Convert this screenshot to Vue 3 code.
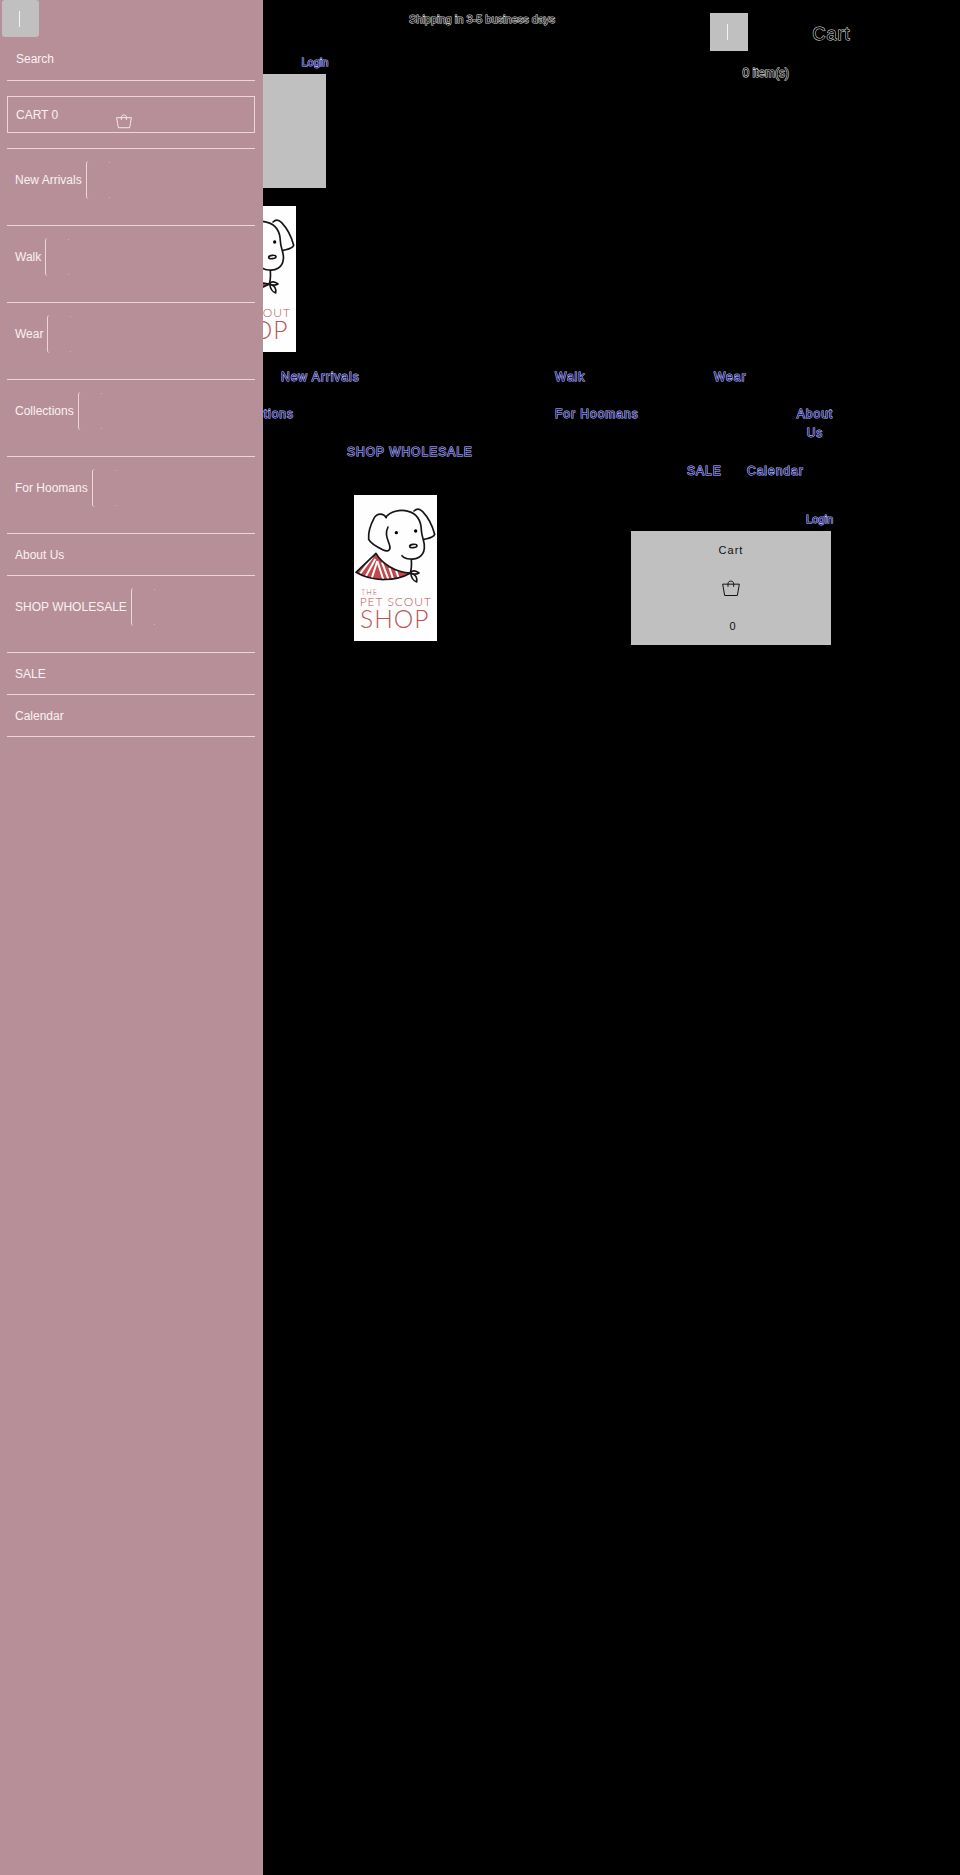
<template>
  <div class="page">
    <!-- shared drawings -->
    <svg class="sprite" aria-hidden="true">
      <symbol id="bag" viewBox="0 0 54 50">
        <path d="M2 12H52L46 46H8Z M18 20V11C18 0 35 0 35 11V20" fill="none" stroke="currentColor" stroke-width="3" />
      </symbol>
      <symbol id="logo" viewBox="42 30 249 438">
        <clipPath id="scarf">
          <path d="M108 205C125 235 165 262 212 264C170 288 100 293 48 262Z" />
        </clipPath>
        <rect x="42" y="30" width="249" height="438" fill="#fefefe" />
        <g clip-path="url(#scarf)">
          <rect x="42" y="200" width="175" height="95" fill="#c4474b" />
          <path
            d="M98 216L56 272M106 222L72 284M112 228L92 290M112 228L132 290M126 232L148 290M148 248L162 290M168 256L180 290"
            fill="none"
            stroke="#fff"
            stroke-width="6"
          />
        </g>
        <g fill="none" stroke="#151515" stroke-width="5" stroke-linecap="round" stroke-linejoin="round">
          <path d="M108 205L48 262C100 293 170 288 212 264C165 262 125 235 108 205Z" />
          <path d="M139 98C130 84 112 84 103 98C90 122 84 142 86 163C92 176 112 186 128 194C142 201 150 198 150 186C146 166 132 150 144 126" />
          <path d="M137 97C150 80 180 71 205 79C230 86 243 105 244 135C245 160 256 170 253 190C250 216 228 225 210 222C198 221 190 217 186 212" />
          <path d="M222 78C230 70 240 72 248 80C265 98 278 125 284 148C280 158 268 159 253 163" />
          <path d="M214 224C215 240 215 252 211 263" />
          <path d="M212 263C217 254 228 257 237 264C228 269 219 268 212 264C214 278 221 288 230 291C233 280 227 268 214 265" />
          <ellipse cx="220" cy="183" rx="11" ry="5" transform="rotate(-6 220 183)" />
        </g>
        <circle cx="169" cy="143" r="5" />
        <circle cx="227" cy="138" r="5" />
        <g class="logo-text" fill="#b95558">
          <text x="63" y="329" font-size="22">THE</text>
          <text x="59" y="364" font-size="36">PET SCOUT</text>
          <text x="60" y="428" font-size="74">SHOP</text>
        </g>
      </symbol>
    </svg>

    <main class="content">
      <p class="announcement outlined">Shipping in 3-5 business days</p>

      <section class="bar-top">
        <a href="#" class="login link">Login</a>
        <button class="cart-block" type="button" aria-label="Cart"></button>
        <svg class="logo" role="img" aria-label="The Pet Scout Shop"><use href="#logo" /></svg>
      </section>

      <nav class="nav">
        <div v-for="(row, i) in navRows" :key="i" class="nav-row" :class="'row-' + (i + 1)">
          <a v-for="item in row" :key="item" href="#" class="link">{{ item }}</a>
        </div>
      </nav>

      <section class="bar-bottom">
        <svg class="logo" role="img" aria-label="The Pet Scout Shop"><use href="#logo" /></svg>
        <div class="account">
          <a href="#" class="login link">Login</a>
          <button class="cart-block" type="button">
            <span>Cart</span>
            <svg class="bag"><use href="#bag" /></svg>
            <span class="qty">0</span>
          </button>
        </div>
      </section>
    </main>

    <aside class="cart-panel">
      <div class="cart-head">
        <button class="close square" type="button" aria-label="Close cart"></button>
        <h2 class="outlined">Cart</h2>
      </div>
      <p class="outlined">0 item(s)</p>
    </aside>

    <aside class="drawer">
      <button class="close" type="button" aria-label="Close menu"></button>
      <input class="search" type="text" placeholder="Search" aria-label="Search" />
      <a href="#" class="drawer-cart">
        CART 0
        <svg class="bag-small"><use href="#bag" /></svg>
      </a>
      <ul class="menu">
        <li v-for="item in menu" :key="item.label" :class="{ parent: item.children }">
          <a href="#">{{ item.label }}</a>
          <button v-if="item.children" class="toggle" type="button" :aria-label="'Expand ' + item.label"></button>
        </li>
      </ul>
    </aside>
  </div>
</template>

<script setup>
const navRows = [
  ['New Arrivals', 'Walk', 'Wear'],
  ['Collections', 'For Hoomans', 'About Us'],
  ['SHOP WHOLESALE'],
  ['SALE', 'Calendar']
]

const menu = [
  { label: 'New Arrivals', children: true },
  { label: 'Walk', children: true },
  { label: 'Wear', children: true },
  { label: 'Collections', children: true },
  { label: 'For Hoomans', children: true },
  { label: 'About Us' },
  { label: 'SHOP WHOLESALE', children: true },
  { label: 'SALE' },
  { label: 'Calendar' }
]
</script>

<style>
body {
  background: #000;
}
</style>

<style scoped>
.page {
  position: relative;
  min-height: 100vh;
  overflow: hidden;
  background: #000;
  font-family: 'Liberation Sans', Arial, sans-serif;
  font-size: 12px;
  line-height: 19px;
}

p,
h2,
ul {
  margin: 0;
  padding: 0;
}

a {
  text-decoration: none;
}

button {
  border: 0;
  padding: 0;
  background: #c0c0c0;
  font-family: inherit;
}

.sprite {
  position: absolute;
  width: 0;
  height: 0;
}

.outlined {
  color: #000;
  -webkit-text-stroke: 1px #e4e4e4;
  paint-order: stroke fill;
}

.link {
  color: #141478;
  -webkit-text-stroke: 1px #c8c8ff;
  paint-order: stroke fill;
}

.announcement {
  padding: 10px 0 24px 4px;
  text-align: center;
  font-size: 11px;
}

.login {
  margin-bottom: 2px;
  font-size: 11px;
}

.logo {
  display: block;
  width: 83px;
  height: 146px;
}

.logo-text {
  font-family: Lato, sans-serif;
  font-weight: 300;
  letter-spacing: 3px;
}

.bar-top {
  display: flex;
  flex-direction: column;
  align-items: flex-end;
  width: calc(34% + 2px);
}

.bar-top .logo {
  margin: 18px 32px 16px 0;
}

.cart-block {
  display: flex;
  flex-direction: column;
  align-items: center;
  justify-content: space-between;
  width: 200px;
  height: 114px;
  margin-right: 2px;
  padding: 10px 0 9px;
  color: #111;
  font-size: 11px;
  line-height: 19px;
  letter-spacing: 1px;
}

.bag {
  width: 18px;
  height: 17px;
}

.qty {
  padding-left: 4px;
}

.nav {
  letter-spacing: 1px;
}

.nav-row {
  display: grid;
}

.row-1 {
  grid-template-columns: 281fr 274fr 159fr 246fr;
  margin-bottom: 18px;
}

.row-1 .link:first-child {
  grid-column: 2;
}

.row-2 {
  grid-template-columns: 294fr 261fr 241fr 38fr 126fr;
}

.row-2 .link:first-child {
  text-align: right;
}

.row-2 .link:nth-child(2) {
  grid-column: 3;
}

.row-2 .link:nth-child(3) {
  grid-column: 4;
  text-align: center;
}

.row-3 {
  grid-template-columns: 347fr 613fr;
}

.row-4 {
  grid-template-columns: 687fr 60fr 213fr;
}

.row-3 .link:first-child,
.row-4 .link:first-child {
  grid-column: 2;
}

.bar-bottom {
  display: grid;
  grid-template-columns: 354fr 277fr 329fr;
  padding-top: 14px;
}

.bar-bottom .logo {
  grid-column: 2;
}

.account {
  display: flex;
  flex-direction: column;
  align-items: flex-end;
  width: 202px;
  padding-top: 15px;
}

.cart-panel {
  position: absolute;
  top: 13px;
  right: 0;
  width: 26%;
}

.cart-head {
  display: flex;
  align-items: center;
  gap: 64px;
  margin-bottom: 13px;
}

.cart-head h2 {
  padding-top: 4px;
  font-size: 18px;
  font-weight: 400;
  letter-spacing: 1px;
}

.cart-panel p {
  padding-left: 32px;
}

.close {
  display: flex;
  align-items: center;
  justify-content: center;
  width: 38px;
  height: 38px;
  padding-right: 3px;
  border-radius: 3px;
}

.close::before {
  content: '';
  width: 1px;
  height: 16px;
  background: #f4f4f4;
}

.square {
  border-radius: 0;
}

.drawer {
  position: absolute;
  top: 0;
  bottom: 0;
  left: 0;
  box-sizing: border-box;
  width: 263px;
  padding: 0 7px;
  border-right: 1px solid #a8979b;
  background: #b68f99;
  color: #fbf1f3;
}

.drawer .close {
  width: 37px;
  height: 37px;
  margin-left: -5px;
}

.search {
  display: block;
  box-sizing: border-box;
  width: 100%;
  height: 32px;
  margin-top: 12px;
  padding: 0 9px 11px;
  border: 0;
  border-bottom: 1px solid #edd5da;
  background: none;
  color: inherit;
  font: inherit;
}

.search::placeholder {
  color: inherit;
  opacity: 1;
}

.drawer-cart {
  display: flex;
  align-items: center;
  box-sizing: border-box;
  height: 37px;
  margin: 15px 0;
  padding: 1px 8px 0;
  border: 1px solid #edd5da;
  color: inherit;
}

.bag-small {
  width: 16px;
  height: 15px;
  margin: 12px 0 0 58px;
}

.menu {
  list-style: none;
  border-top: 1px solid #edd5da;
}

.menu li {
  display: flex;
  align-items: center;
  box-sizing: border-box;
  height: 42px;
  padding: 1px 8px 0;
  border-bottom: 1px solid #edd5da;
}

.menu .parent {
  height: 77px;
  padding: 0 8px 14px;
}

.menu a {
  color: inherit;
}

.toggle {
  width: 24px;
  height: 38px;
  margin-left: 4px;
  border-left: 1px solid #edd5da;
  border-radius: 3px;
  background:
    linear-gradient(#dfc0c7, #dfc0c7) 100% 1px / 1px 1px no-repeat,
    linear-gradient(#dfc0c7, #dfc0c7) 100% 36px / 1px 1px no-repeat;
}
</style>
